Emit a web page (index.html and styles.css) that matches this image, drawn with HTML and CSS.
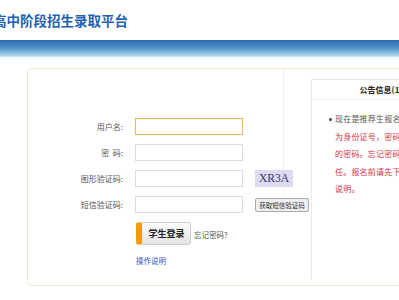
FILE: index.html
```html
<!DOCTYPE html>
<html>

<head>
  <meta charset="UTF-8">
  <title>高中阶段招生录取平台</title>
  <link rel="stylesheet" href="styles.css">
</head>

<body>
  <div class="header">
    <h1>高中阶段招生录取平台</h1>
  </div>
  <div class="navbar"></div>

  <div class="main">
    <div class="box">
      <div class="login">
        <div class="row">
          <label>用户名:</label>
          <input type="text" class="focus">
        </div>
        <div class="row">
          <label>密&nbsp;&nbsp;码:</label>
          <input type="password">
        </div>
        <div class="row">
          <label>图形验证码:</label>
          <input type="text">
          <span class="captcha">XR3A</span>
        </div>
        <div class="row">
          <label>短信验证码:</label>
          <input type="text">
          <button class="sms">获取短信验证码</button>
        </div>
        <div class="actions">
          <button class="submit">学生登录</button>
          <a href="#" class="forget">忘记密码?</a>
        </div>
        <div class="help">
          <a href="#">操作说明</a>
        </div>
      </div>

      <div class="notice">
        <div class="notice-title">公告信息(1条)</div>
        <ul>
          <li>现在是推荐生报名阶段，用户名<br>
            <span class="red">为身份证号，密码为报名时设置<br>
            的密码。忘记密码后果由考生自负责<br>
            任。报名前请先下载并阅读操作<br>
            说明。</span>
          </li>
        </ul>
      </div>
    </div>
  </div>
</body>

</html>
```

FILE: styles.css
```css
* {
  margin: 0;
  padding: 0;
  box-sizing: border-box;
}

body {
  font-family: "Noto Sans CJK SC", "Noto Sans", sans-serif;
  background: #fff;
  overflow: hidden;
  width: 399px;
  height: 300px;
}

.header {
  height: 40px;
  padding-top: 11px;
}

.header h1 {
  margin-left: -7px;
  font-size: 13.5px;
  line-height: 18px;
  color: #1e63b1;
  font-weight: bold;
  white-space: nowrap;
}

.navbar {
  height: 19px;
  background: linear-gradient(#2a6cb2, #4f90c9 45%, #a6d3e8 90%, #d2ecf4);
  border-bottom: 2px solid #eef9fb;
}

.main {
  padding-top: 9px;
}

.box {
  margin-left: 27px;
  width: 520px;
  height: 218px;
  border: 1px solid #f4e6d4;
  border-radius: 5px;
  display: flex;
}

.login {
  flex-shrink: 0;
  width: 256px;
  padding-top: 49px;
  border-right: 1px solid #f6efe4;
  margin-bottom: 90px;
}

.row {
  display: flex;
  align-items: center;
  height: 17px;
  margin-bottom: 9px;
}

.row > * {
  flex-shrink: 0;
}

.row label {
  width: 95px;
  text-align: right;
  font-size: 8px;
  color: #555;
  margin-right: 12px;
}

.row input {
  width: 108px;
  height: 17px;
  border: 1px solid #dcdcdc;
  outline: none;
}

.row input.focus {
  border: 1px solid #e3bd6b;
  box-shadow: 0 0 1px #f3d9a0;
}

.captcha {
  margin-left: 12px;
  width: 38px;
  height: 17px;
  line-height: 17px;
  text-align: center;
  background: #dedaf0;
  color: #35356a;
  font-family: "Liberation Serif", serif;
  font-size: 11.5px;
}

.sms {
  margin-left: 12px;
  width: 54px;
  height: 14px;
  font-family: inherit;
  font-size: 6.5px;
  color: #333;
  background: #efefef;
  border: 1px solid #a9a9a9;
  border-radius: 2px;
  white-space: nowrap;
}

.actions {
  display: flex;
  align-items: center;
  padding-left: 108px;
  margin-top: 1px;
}

.submit {
  width: 55px;
  height: 23px;
  border: 1px solid #cfcfcf;
  border-left: 6px solid #f39a13;
  border-radius: 3px;
  background: linear-gradient(#fbfbfb, #e4e4e4);
  font-family: inherit;
  font-size: 9px;
  font-weight: bold;
  color: #222;
  padding-left: 1px;
}

.forget {
  margin-left: 3px;
  margin-top: 2px;
  font-size: 7.5px;
  color: #555;
  text-decoration: none;
}

.help {
  padding-left: 108px;
  margin-top: 5px;
  line-height: 14px;
}

.help a {
  font-size: 7.5px;
  color: #3653c4;
  text-decoration: none;
}

.notice {
  flex-shrink: 0;
  margin-left: 27px;
  margin-top: 10px;
  width: 148px;
  height: 200px;
  border: 1px solid #e8e8e8;
  border-bottom: none;
}

.notice-title {
  height: 20px;
  line-height: 20px;
  text-align: center;
  font-size: 8px;
  font-weight: bold;
  color: #222;
  border-bottom: 1px solid #f0f0f0;
  white-space: nowrap;
}

.notice ul {
  list-style: none;
  padding: 10px 0 0 23px;
}

.notice li {
  position: relative;
  font-size: 8px;
  line-height: 17.5px;
  color: #555;
  letter-spacing: 0.2px;
  white-space: nowrap;
}

.notice li::before {
  content: "";
  position: absolute;
  left: -6px;
  top: 8px;
  width: 3px;
  height: 3px;
  border-radius: 50%;
  background: #444;
}

.notice .red {
  color: #d0344a;
}
```
